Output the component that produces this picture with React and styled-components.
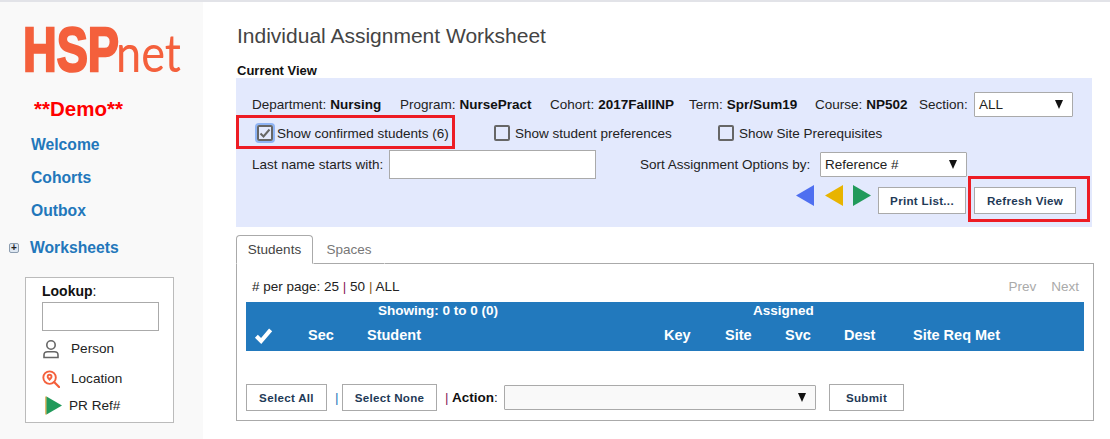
import React from 'react';
import styled, { createGlobalStyle } from 'styled-components';

const GlobalStyle = createGlobalStyle`
  html, body {
    margin: 0;
    padding: 0;
    background: #fff;
    font-family: 'Liberation Sans', Arial, sans-serif;
    font-size: 13.5px;
    color: #222;
  }
`;

const Page = styled.div`
  width: 1110px;
  height: 439px;
  display: flex;
  overflow: hidden;
  box-sizing: border-box;
  border-top: 2px solid #e2e3e8;
`;

// Sidebar
const Sidebar = styled.aside`
  width: 203px;
  flex: none;
  background: #f9f9f9;
  display: flex;
  flex-direction: column;
  padding: 23px 0 0 25px;
  box-sizing: border-box;
`;

const LogoWrap = styled.svg`
  display: block;
  width: 164px;
  height: 50px;
  margin-left: -4px;
  overflow: visible;
`;

const Demo = styled.div`
  margin: 22px 0 1px 9px;
  color: #f00;
  font-size: 20.5px;
  line-height: 24px;
  font-weight: 700;
`;

const NavLink = styled.a`
  display: block;
  margin: 12px 0 0 6px;
  height: 21px;
  line-height: 21px;
  color: #2277bb;
  font-size: 15.7px;
  font-weight: 700;
`;

const NavGroup = styled.div`
  display: flex;
  align-items: center;
  gap: 11px;
  margin: 16px 0 0 -16px;
  height: 21px;
  color: #2277bb;
  font-size: 15.7px;
  font-weight: 700;
`;

const Plus = styled.span`
  width: 10px;
  height: 10px;
  border: 1px solid #8c9db0;
  border-radius: 2px;
  background: #dfe8f2;
  box-sizing: border-box;
  display: flex;
  align-items: center;
  justify-content: center;
  color: #222;
  font-size: 10px;
  line-height: 8px;
  font-weight: 700;
`;

const LookupBox = styled.div`
  margin-top: 19px;
  width: 149px;
  height: 146px;
  border: 1px solid #bbb;
  background: #fff;
  box-sizing: border-box;
  padding: 5px 0 0 16px;
`;

const LookupLabel = styled.div`
  font-size: 14px;
  line-height: 17px;
  color: #111;
  b { font-weight: 700; }
`;

const LookupInput = styled.div`
  width: 117px;
  height: 29px;
  margin-top: 2px;
  border: 1px solid #aaa;
  box-sizing: border-box;
`;

const LookupItem = styled.div`
  display: flex;
  align-items: center;
  height: ${(p) => p.$h}px;
  margin-left: ${(p) => p.$indent || 0}px;
  font-size: 13.6px;
  color: #222;
`;

const ItemIcon = styled.span`
  width: ${(p) => p.$w}px;
  flex: none;
  display: flex;
`;

// Main column
const Main = styled.main`
  width: 858px;
  margin-left: 33px;
  flex: none;
`;

const Title = styled.h1`
  margin: 0;
  padding: 22px 0 0 1px;
  font-size: 21px;
  line-height: 24px;
  font-weight: 400;
  color: #444;
`;

const SubTitle = styled.h2`
  margin: 0;
  padding: 15px 0 0 1px;
  height: 15px;
  font-size: 13px;
  line-height: 15px;
  font-weight: 700;
  color: #111;
`;

const ViewPanel = styled.section`
  position: relative;
  width: 856px;
  height: 149px;
  box-sizing: border-box;
  background: #e3e9fd;
  padding: 14px 0 0 16px;
`;

const Row = styled.div`
  display: flex;
  align-items: center;
  height: ${(p) => p.$h}px;
  margin-top: ${(p) => p.$top || 0}px;
`;

const Cell = styled.div`
  width: ${(p) => p.$w}px;
  flex: none;
  display: flex;
  align-items: center;
  box-sizing: border-box;
  padding-left: ${(p) => p.$pl || 0}px;
  white-space: nowrap;
  b { font-weight: 700; margin-left: 4px; color: #111; }
`;

const CheckBox = styled.span`
  width: 16px;
  height: 16px;
  flex: none;
  margin-right: ${(p) => (p.$focus ? 4 : 5)}px;
  box-sizing: border-box;
  border: 2px solid #666;
  border-radius: 2px;
  display: flex;
  align-items: center;
  justify-content: center;
  box-shadow: ${(p) => (p.$focus ? '0 0 0 2px #8fb4f5' : 'none')};
`;

const TextInput = styled.div`
  width: 207px;
  height: 29px;
  background: #fff;
  border: 1px solid #aaa;
  box-sizing: border-box;
`;

const Select = styled.div`
  width: ${(p) => p.$w}px;
  height: 25px;
  flex: none;
  display: flex;
  align-items: center;
  justify-content: space-between;
  background: ${(p) => p.$bg || '#fff'};
  border: 1px solid #aaa;
  border-radius: 1px;
  box-sizing: border-box;
  padding: 0 9px 0 4px;
  font-size: 13.5px;
  color: #222;
`;

const Caret = styled.span`
  width: 0;
  height: 0;
  border-left: 4.5px solid transparent;
  border-right: 4.5px solid transparent;
  border-top: 9px solid #111;
`;

const Actions = styled.div`
  display: flex;
  justify-content: flex-end;
  align-items: flex-start;
  margin-top: 6px;
  padding-right: 16px;
`;

const Arrow = styled.svg`
  display: block;
  width: 18px;
  height: 21px;
  margin-right: ${(p) => p.$mr}px;
`;

const Button = styled.button`
  width: ${(p) => p.$w}px;
  height: 27px;
  flex: none;
  margin: ${(p) => p.$m || 0};
  padding: 0;
  background: #fff;
  border: 1px solid #aaa;
  font-family: 'Liberation Sans', Arial, sans-serif;
  font-size: 11.6px;
  font-weight: 700;
  letter-spacing: 0.3px;
  color: #1f3a57;
`;

const RedMark = styled.div`
  position: absolute;
  left: ${(p) => p.$x}px;
  top: ${(p) => p.$y}px;
  width: ${(p) => p.$w}px;
  height: ${(p) => p.$h}px;
  box-sizing: border-box;
  border: 3px solid #ed1c24;
`;

// Tabs
const Tabs = styled.div`
  display: flex;
  align-items: flex-end;
  height: 29px;
  margin-top: 8px;
  width: 858px;
`;

const Tab = styled.div`
  width: ${(p) => p.$w}px;
  height: 29px;
  box-sizing: border-box;
  display: flex;
  align-items: center;
  justify-content: center;
  padding-bottom: 1px;
  font-size: 13.5px;
  color: ${(p) => (p.$active ? '#444' : '#777')};
  border: 1px solid ${(p) => (p.$active ? '#aaa' : 'transparent')};
  border-bottom: ${(p) => (p.$active ? '1px solid #fff' : '1px solid #aaa')};
  border-radius: 4px 4px 0 0;
`;

const TabFill = styled.div`
  flex: 1;
  border-bottom: 1px solid #aaa;
`;

const TabBody = styled.div`
  width: 858px;
  height: 158px;
  box-sizing: border-box;
  margin-top: -1px;
  border: 1px solid #aaa;
  border-top: 1px solid transparent;
  padding: 0 9px;
`;

const PagerRow = styled.div`
  display: flex;
  justify-content: space-between;
  height: 38px;
  padding: 15px 5px 0 6px;
  box-sizing: border-box;
  line-height: 16px;
`;

const Sep = styled.span`
  color: ${(p) => p.$color};
`;

const PagerNav = styled.div`
  display: flex;
  gap: 15px;
  color: #aaa;
`;

const TableHead = styled.div`
  width: 838px;
  height: 49px;
  background: #2279bd;
  color: #fff;
  font-weight: 700;
`;

const HeadTop = styled.div`
  display: grid;
  grid-template-columns: 132px 375px 1fr;
  height: 17px;
  line-height: 17px;
`;

const HeadCols = styled.div`
  display: grid;
  grid-template-columns: 62px 59px 297px 61px 60px 59px 69px 1fr;
  align-items: center;
  height: 32px;
  font-size: 14.5px;
`;

const CheckCol = styled.span`
  display: flex;
  padding-left: 8px;
`;

const BottomRow = styled.div`
  display: flex;
  align-items: center;
  height: 27px;
  margin-top: 33px;
`;

const Divider = styled.span`
  flex: none;
  color: ${(p) => p.$color};
  width: ${(p) => p.$w}px;
  padding-left: ${(p) => p.$pl}px;
  box-sizing: border-box;
`;

const ActionLabel = styled.span`
  width: 52px;
  flex: none;
  color: #111;
  b { font-weight: 700; }
`;

function Logo() {
  return (
    <LogoWrap viewBox="0 0 164 50">
      <text
        x="2"
        y="46"
        fill="#f4603c"
        stroke="#f4603c"
        strokeWidth="2.5"
        fontFamily="Liberation Sans, Arial, sans-serif"
        fontWeight="700"
        fontSize="63"
        textLength="96"
        lengthAdjust="spacingAndGlyphs"
      >
        HSP
      </text>
      <text
        x="95"
        y="47"
        fill="#f4603c"
        fontFamily="Lato, sans-serif"
        fontWeight="400"
        fontSize="52"
        textLength="65"
        lengthAdjust="spacingAndGlyphs"
      >
        net
      </text>
    </LogoWrap>
  );
}

function PersonIcon() {
  return (
    <svg width="18" height="20" viewBox="0 0 18 20" fill="none" stroke="#666" strokeWidth="1.6">
      <circle cx="9" cy="6" r="4.2" />
      <path d="M2 18.5v-2.5c0-2 1.8-3.2 3.6-3.2h6.8c1.8 0 3.6 1.2 3.6 3.2v2.5z" />
    </svg>
  );
}

function LocationIcon() {
  return (
    <svg width="18" height="18" viewBox="0 0 19 19" fill="none">
      <circle cx="8" cy="8" r="6.6" stroke="#f4603c" strokeWidth="2" />
      <path d="M8 4a3 3 0 0 1 3 3c0 1.8-3 4.5-3 4.5S5 8.8 5 7a3 3 0 0 1 3-3z" fill="#f4603c" />
      <circle cx="8" cy="7" r="1" fill="#fff" />
      <path d="M13 13l5 5" stroke="#f4603c" strokeWidth="2.4" strokeLinecap="round" />
    </svg>
  );
}

function PlayIcon() {
  return (
    <svg width="17" height="19" viewBox="0 0 17 19">
      <path d="M1 .5v18" stroke="#d9a441" strokeWidth="1.5" />
      <path d="M1.5 .5L17 9.5 1.5 18.5z" fill="#219a5b" />
    </svg>
  );
}

function Check({ size = 12, color = '#666', width = 2 }) {
  return (
    <svg width={size} height={size} viewBox="0 0 12 12" fill="none" stroke={color} strokeWidth={width}>
      <path d="M1.5 6.5l3 3 6-7" />
    </svg>
  );
}

export default function App() {
  return (
    <Page>
      <GlobalStyle />
      <Sidebar>
        <Logo />
        <Demo>**Demo**</Demo>
        <NavLink>Welcome</NavLink>
        <NavLink>Cohorts</NavLink>
        <NavLink>Outbox</NavLink>
        <NavGroup>
          <Plus>+</Plus>
          Worksheets
        </NavGroup>
        <LookupBox>
          <LookupLabel>
            <b>Lookup</b>:
          </LookupLabel>
          <LookupInput />
          <LookupItem $h={35}>
            <ItemIcon $w={29}><PersonIcon /></ItemIcon>
            Person
          </LookupItem>
          <LookupItem $h={25}>
            <ItemIcon $w={29}><LocationIcon /></ItemIcon>
            Location
          </LookupItem>
          <LookupItem $h={28} $indent={3}>
            <ItemIcon $w={24}><PlayIcon /></ItemIcon>
            PR Ref#
          </LookupItem>
        </LookupBox>
      </Sidebar>
      <Main>
        <Title>Individual Assignment Worksheet</Title>
        <SubTitle>Current View</SubTitle>
        <ViewPanel>
          <Row $h={25}>
            <Cell $w={148}>Department:<b>Nursing</b></Cell>
            <Cell $w={150}>Program:<b>NursePract</b></Cell>
            <Cell $w={139}>Cohort:<b>2017FallINP</b></Cell>
            <Cell $w={126}>Term:<b>Spr/Sum19</b></Cell>
            <Cell $w={104}>Course:<b>NP502</b></Cell>
            <Cell $w={55}>Section:</Cell>
            <Select $w={99}>ALL<Caret /></Select>
          </Row>
          <Row $h={24} $top={4}>
            <Cell $w={242} $pl={5}>
              <CheckBox $focus><Check /></CheckBox>
              Show confirmed students (6)
            </Cell>
            <Cell $w={224}>
              <CheckBox />
              Show student preferences
            </Cell>
            <Cell $w={200}>
              <CheckBox />
              Show Site Prerequisites
            </Cell>
          </Row>
          <Row $h={29} $top={5}>
            <Cell $w={137}>Last name starts with:</Cell>
            <TextInput />
            <Cell $w={224} $pl={44}>
              Sort Assignment Options by:
            </Cell>
            <Select $w={147}>Reference #<Caret /></Select>
          </Row>
          <Actions>
            <Arrow $mr={11} viewBox="0 0 18 21"><path d="M18 0v21L0 10.5z" fill="#4f6ff0" /></Arrow>
            <Arrow $mr={10} viewBox="0 0 18 21"><path d="M18 0v21L0 10.5z" fill="#e8b400" /></Arrow>
            <Arrow $mr={7} viewBox="0 0 18 21"><path d="M0 0v21l18-10.5z" fill="#219a5b" /></Arrow>
            <Button $w={88} $m="2px 8px 0 0">Print List...</Button>
            <Button $w={102} $m="2px 0 0 0">Refresh View</Button>
          </Actions>
          <RedMark $x={0} $y={37} $w={219} $h={34} />
          <RedMark $x={732} $y={98} $w={122} $h={46} />
        </ViewPanel>
        <Tabs>
          <Tab $w={77} $active>Students</Tab>
          <Tab $w={72}>Spaces</Tab>
          <TabFill />
        </Tabs>
        <TabBody>
          <PagerRow>
            <span>
              # per page: 25 <Sep $color="#8a1a5c">|</Sep> 50 <Sep $color="#8a5a1a">|</Sep> ALL
            </span>
            <PagerNav>
              <span>Prev</span>
              <span>Next</span>
            </PagerNav>
          </PagerRow>
          <TableHead>
            <HeadTop>
              <span />
              <span>Showing: 0 to 0 (0)</span>
              <span>Assigned</span>
            </HeadTop>
            <HeadCols>
              <CheckCol><Check size={19} color="#fff" width={2.6} /></CheckCol>
              <span>Sec</span>
              <span>Student</span>
              <span>Key</span>
              <span>Site</span>
              <span>Svc</span>
              <span>Dest</span>
              <span>Site Req Met</span>
            </HeadCols>
          </TableHead>
          <BottomRow>
            <Button $w={81}>Select All</Button>
            <Divider $w={15} $pl={8} $color="#2277bb">|</Divider>
            <Button $w={95}>Select None</Button>
            <Divider $w={15} $pl={8} $color="#8a1a5c">|</Divider>
            <ActionLabel><b>Action</b>:</ActionLabel>
            <Select $w={312} $bg="#f9f9f9">&nbsp;<Caret /></Select>
            <Button $w={75} $m="0 0 0 13px">Submit</Button>
          </BottomRow>
        </TabBody>
      </Main>
    </Page>
  );
}
